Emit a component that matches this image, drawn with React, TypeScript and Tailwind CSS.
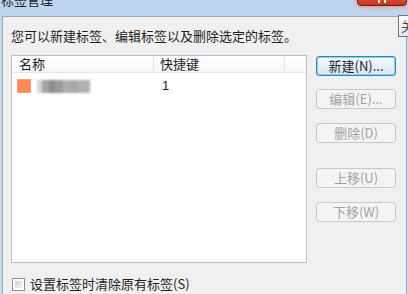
import React from "react";

const font = { fontFamily: '"Noto Sans CJK SC", "Noto Sans", sans-serif' };

function Btn({ label, primary, disabled, className }: { label: string; primary?: boolean; disabled?: boolean; className?: string }) {
  if (primary) {
    return (
      <div className={`w-[80px] h-[20px] rounded-[3px] border border-[#3c7fb1] bg-gradient-to-b from-[#f4f9fc] to-[#d3e8f4] shadow-[inset_0_0_0_1px_#7fd2f4] flex items-center justify-center text-[13px] text-[#1e1e1e] ${className ?? ""}`}>
        {label}
      </div>
    );
  }
  return (
    <div className={`w-[80px] h-[20px] rounded-[3px] border border-[#c6c8ca] bg-[#f4f4f4] flex items-center justify-center text-[13px] ${disabled ? "text-[#a3a3a3]" : "text-[#1e1e1e]"} ${className ?? ""}`}>
      {label}
    </div>
  );
}

export default function App() {
  return (
    <div style={font} className="w-[408px] h-[294px] overflow-hidden flex flex-col bg-gradient-to-b from-[#bdd4ed] to-[#d3e3f4] relative">
      {/* title bar */}
      <div className="h-[16px] relative shrink-0">
        <div className="absolute left-[1px] top-[-8px] text-[13px] leading-[16px] text-[#222]">标签管理</div>
        <div className="absolute left-[357px] top-[-12px] w-[50px] h-[18px] rounded-b-[4px] border border-[#6a1d12] bg-gradient-to-b from-[#e8795a] to-[#c6341a] shadow-[0_1px_4px_#f0908a] flex justify-center">
          <div className="mt-[10px] w-[8px] h-[4px] flex justify-between">
            <div className="w-[2px] h-[4px] bg-white" />
            <div className="w-[2px] h-[4px] bg-white" />
          </div>
        </div>
      </div>
      {/* body */}
      <div className="flex-1 flex">
        <div className="w-[2px] bg-[#c8d9ee]" />
        <div className="flex-1 bg-[#f0f0f0] border-t border-l border-[#9aa9ba] flex flex-col pl-[8px] pt-[11px]">
          <div className="text-[13px] leading-[16px] text-[#1e1e1e]">您可以新建标签、编辑标签以及删除选定的标签。</div>
          <div className="flex mt-[11px]">
            <div className="w-[296px] h-[208px] bg-white border border-[#bdbdc6] flex flex-col">
              <div className="h-[17px] flex bg-gradient-to-b from-white to-[#f6f7f8] border-b border-[#e4e6e8] text-[13px] leading-[16px] text-[#1e1e1e]">
                <div className="w-[142px] pl-[7px] border-r border-[#e4e6e8]">名称</div>
                <div className="w-[131px] pl-[6px] border-r border-[#e4e6e8]">快捷键</div>
                <div className="flex-1" />
              </div>
              <div className="h-[20px] mt-[3px] flex items-center text-[13px] text-[#1e1e1e]">
                <div className="w-[142px] pl-[5px] flex items-center">
                  <div className="w-[14px] h-[14px] bg-[#ff8a52] border border-[#f39a76]" />
                  <div className="ml-[6px] flex h-[13px] blur-[1px]">
                    <div className="w-[5px] bg-[#d6d6d6]" />
                    <div className="w-[7px] bg-[#a4a4a4]" />
                    <div className="w-[6px] bg-[#8c8c8c]" />
                    <div className="w-[8px] bg-[#9a9a9a]" />
                    <div className="w-[7px] bg-[#b0b0b0]" />
                    <div className="w-[8px] bg-[#a8a8a8]" />
                    <div className="w-[12px] bg-[#b2b2b2]" />
                  </div>
                </div>
                <div className="pl-[8px]" style={{ fontFamily: '"Liberation Sans", sans-serif' }}>1</div>
              </div>
            </div>
            <div className="ml-[9px] mt-[1px] flex flex-col">
              <Btn label="新建(N)..." primary />
              <Btn label="编辑(E)..." disabled className="mt-[13px]" />
              <Btn label="删除(D)" disabled className="mt-[14px]" />
              <Btn label="上移(U)" disabled className="mt-[25px]" />
              <Btn label="下移(W)" disabled className="mt-[14px]" />
            </div>
          </div>
          <div className="flex items-center mt-[13px]">
            <div className="w-[13px] h-[13px] border border-[#8e8f8f] bg-white p-[2px] ml-[1px]">
              <div className="w-full h-full bg-gradient-to-br from-[#cfd2d6] to-[#f4f4f4]" />
            </div>
            <div className="ml-[5px] text-[13px] leading-[16px] text-[#1e1e1e]">设置标签时清除原有标签(S)</div>
          </div>
        </div>
        <div className="w-[2px] bg-[#c8d9ee] border-l border-[#9aa9ba]" />
      </div>
      {/* tooltip */}
      <div className="absolute left-[398px] top-[15px] w-[40px] h-[22px] border border-[#767676] bg-gradient-to-b from-white to-[#e4e5f0] text-[13px] leading-[20px] pl-[2px] text-[#4c4c4c]">关闭</div>
    </div>
  );
}
